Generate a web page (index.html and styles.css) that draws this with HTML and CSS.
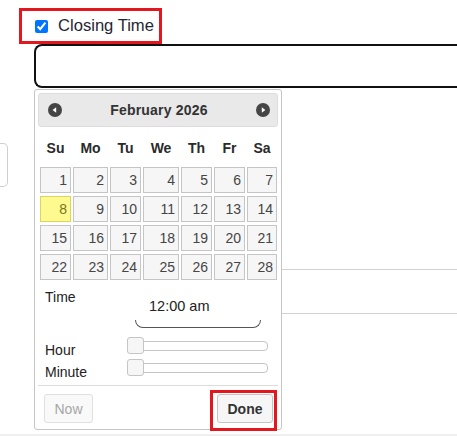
FILE: index.html
```html
<!DOCTYPE html>
<html lang="en">
<head>
<meta charset="utf-8">
<title>Closing Time</title>
<link rel="stylesheet" href="styles.css">
</head>
<body>
<div class="page">
  <label class="check-label">
    <input type="checkbox" class="check" checked>
    <span class="check-text">Closing Time</span>
  </label>
  <input type="text" class="time-input">
  <div class="side-field"></div>
  <div class="rule rule-1"></div>
  <div class="rule rule-2"></div>
  <div class="footer-band"></div>

  <div class="dp">
    <div class="dp-header">
      <svg class="dp-nav" width="14" height="14" viewBox="0 0 14 14"><circle cx="7" cy="7" r="7" fill="#454545"/><polygon points="4.6,7 8.2,4.3 8.2,9.7" fill="#fff"/></svg>
      <div class="dp-title">February 2026</div>
      <svg class="dp-nav" width="14" height="14" viewBox="0 0 14 14"><circle cx="7" cy="7" r="7" fill="#454545"/><polygon points="5.8,4.3 9.4,7 5.8,9.7" fill="#fff"/></svg>
    </div>
    <div class="dp-cal">
      <div class="dp-names">
        <span>Su</span><span>Mo</span><span>Tu</span><span>We</span><span>Th</span><span>Fr</span><span>Sa</span>
      </div>
      <div class="dp-days">
        <span class="day">1</span><span class="day">2</span><span class="day">3</span><span class="day">4</span><span class="day">5</span><span class="day">6</span><span class="day">7</span>
        <span class="day today">8</span><span class="day">9</span><span class="day">10</span><span class="day">11</span><span class="day">12</span><span class="day">13</span><span class="day">14</span>
        <span class="day">15</span><span class="day">16</span><span class="day">17</span><span class="day">18</span><span class="day">19</span><span class="day">20</span><span class="day">21</span>
        <span class="day">22</span><span class="day">23</span><span class="day">24</span><span class="day">25</span><span class="day">26</span><span class="day">27</span><span class="day">28</span>
      </div>
    </div>
    <div class="tp">
      <div class="tp-row tp-time">
        <div class="tp-label tp-label-time">Time</div>
        <div class="tp-value">
          <div class="tp-value-text">12:00 am</div>
          <div class="tp-value-line"></div>
        </div>
      </div>
      <div class="tp-row tp-slider-row">
        <div class="tp-label">Hour</div>
        <div class="slider"><span class="handle"></span></div>
      </div>
      <div class="tp-row tp-slider-row tp-minute">
        <div class="tp-label">Minute</div>
        <div class="slider"><span class="handle"></span></div>
      </div>
    </div>
    <div class="dp-buttons">
      <button class="btn btn-now" disabled>Now</button>
      <button class="btn btn-done">Done</button>
    </div>
  </div>
</div>
</body>
</html>
```
FILE: styles.css
```css
html, body {
  margin: 0;
  padding: 0;
  background: #fff;
  overflow: hidden;
}
body {
  font-family: "Liberation Sans", Arial, sans-serif;
  width: 457px;
  height: 436px;
}
.page {
  position: relative;
  padding-top: 8px;
  height: 428px;
}
.check-label {
  display: flex;
  align-items: center;
  box-sizing: border-box;
  width: 143px;
  height: 36px;
  margin-left: 19px;
  border: 3px solid #e3171d;
  padding-left: 13px;
}
.check {
  width: 13px;
  height: 13px;
  margin: 1px 10px 0 0;
}
.check-text {
  font-size: 16.6px;
  color: #1f2733;
  line-height: 20px;
}
.time-input {
  display: block;
  box-sizing: border-box;
  margin: 0 0 0 34px;
  width: 423px;
  height: 44px;
  border: 2px solid #111;
  border-right: none;
  border-radius: 8px 0 0 8px;
  background: #fff;
  outline: none;
}
.side-field {
  box-sizing: border-box;
  margin-top: 55px;
  width: 8px;
  height: 44px;
  border: 1px solid #cfcfcf;
  border-left: none;
  border-radius: 0 5px 5px 0;
}
.rule {
  height: 1px;
  background: #d2d2d2;
  margin-left: 40px;
}
.rule-1 { margin-top: 82px; }
.rule-2 { margin-top: 43px; }
.footer-band {
  margin-top: 120px;
  height: 2px;
  background: #efefef;
}

/* Datepicker popup */
.dp {
  position: absolute;
  left: 34px;
  top: 89px;
  width: 248px;
  box-sizing: border-box;
  border: 1px solid #c5c5c5;
  border-radius: 3px;
  padding: 3px;
  background: #fff;
  color: #333;
  font-size: 14px;
}
.dp-header {
  display: flex;
  align-items: center;
  box-sizing: border-box;
  height: 34px;
  padding: 0 7px 0 9px;
  background: #e9e9e9;
  border: 1px solid #dddddd;
  border-radius: 3px;
}
.dp-nav {
  display: block;
  flex: none;
}
.dp-title {
  flex: 1;
  text-align: center;
  font-weight: bold;
  color: #333;
  font-size: 14px;
  letter-spacing: 0.2px;
}
.dp-cal {
  padding: 0 2px;
}
.dp-names,
.dp-days {
  display: grid;
  grid-template-columns: 31px 35px 31px 36px 31px 31px 30px;
  column-gap: 2px;
}
.dp-names {
  height: 40px;
  align-items: center;
}
.dp-names span {
  text-align: center;
  font-weight: bold;
  color: #2a2a2a;
  line-height: 16px;
  padding-top: 1px;
}
.dp-days {
  row-gap: 3px;
}
.day {
  box-sizing: border-box;
  height: 26px;
  border: 1px solid #c5c5c5;
  background: #f6f6f6;
  color: #454545;
  text-align: right;
  padding-right: 3px;
  line-height: 24px;
}
.day.today {
  background: #fffa90;
  border-color: #dad55e;
  color: #777620;
}

/* Time picker */
.tp {
  padding-left: 7px;
}
.tp-row {
  display: flex;
  align-items: flex-start;
}
.tp-label {
  width: 82px;
  flex: none;
  line-height: 16px;
  margin-top: 5px;
  color: #222;
}
.tp-label-time {
  width: 90px;
  margin-top: 9px;
}
.tp-value {
  width: 126px;
  padding-top: 18px;
}
.tp-value-text {
  padding-left: 14px;
  font-size: 14.5px;
  line-height: 16px;
  color: #222;
}
.tp-value-line {
  box-sizing: border-box;
  margin-top: 6px;
  height: 8px;
  border: 1px solid #555;
  border-top: none;
  border-radius: 0 0 8px 8px;
}
.tp-slider-row {
  height: 21px;
  margin-top: 9px;
}
.tp-minute {
  margin-top: 1px;
}
.slider {
  position: relative;
  box-sizing: border-box;
  width: 141px;
  height: 10px;
  margin-top: 4px;
  border: 1px solid #c5c5c5;
  border-radius: 4px;
  background: #fff;
}
.handle {
  position: absolute;
  left: -1px;
  top: -5px;
  box-sizing: border-box;
  width: 17px;
  height: 17px;
  border: 1px solid #c5c5c5;
  border-radius: 3px;
  background: #f6f6f6;
}

/* Buttons */
.dp-buttons {
  display: flex;
  justify-content: space-between;
  margin-top: 5px;
  border-top: 1px solid #dddddd;
  padding: 8px 5px 3px 6px;
}
.btn {
  box-sizing: border-box;
  height: 29px;
  border: 1px solid #c5c5c5;
  border-radius: 3px;
  background: #f6f6f6;
  font-family: "Liberation Sans", Arial, sans-serif;
  font-size: 14px;
  color: #333;
  padding: 0;
}
.btn-now {
  width: 49px;
  color: #a6a6a6;
  border-color: #e0e0e0;
  background: #f9f9f9;
}
.btn-done {
  position: relative;
  width: 56px;
  font-weight: bold;
}
.btn-done::after {
  content: "";
  position: absolute;
  left: -8px;
  top: -5px;
  right: -5px;
  bottom: -9px;
  border: 3px solid #e3171d;
}
```
